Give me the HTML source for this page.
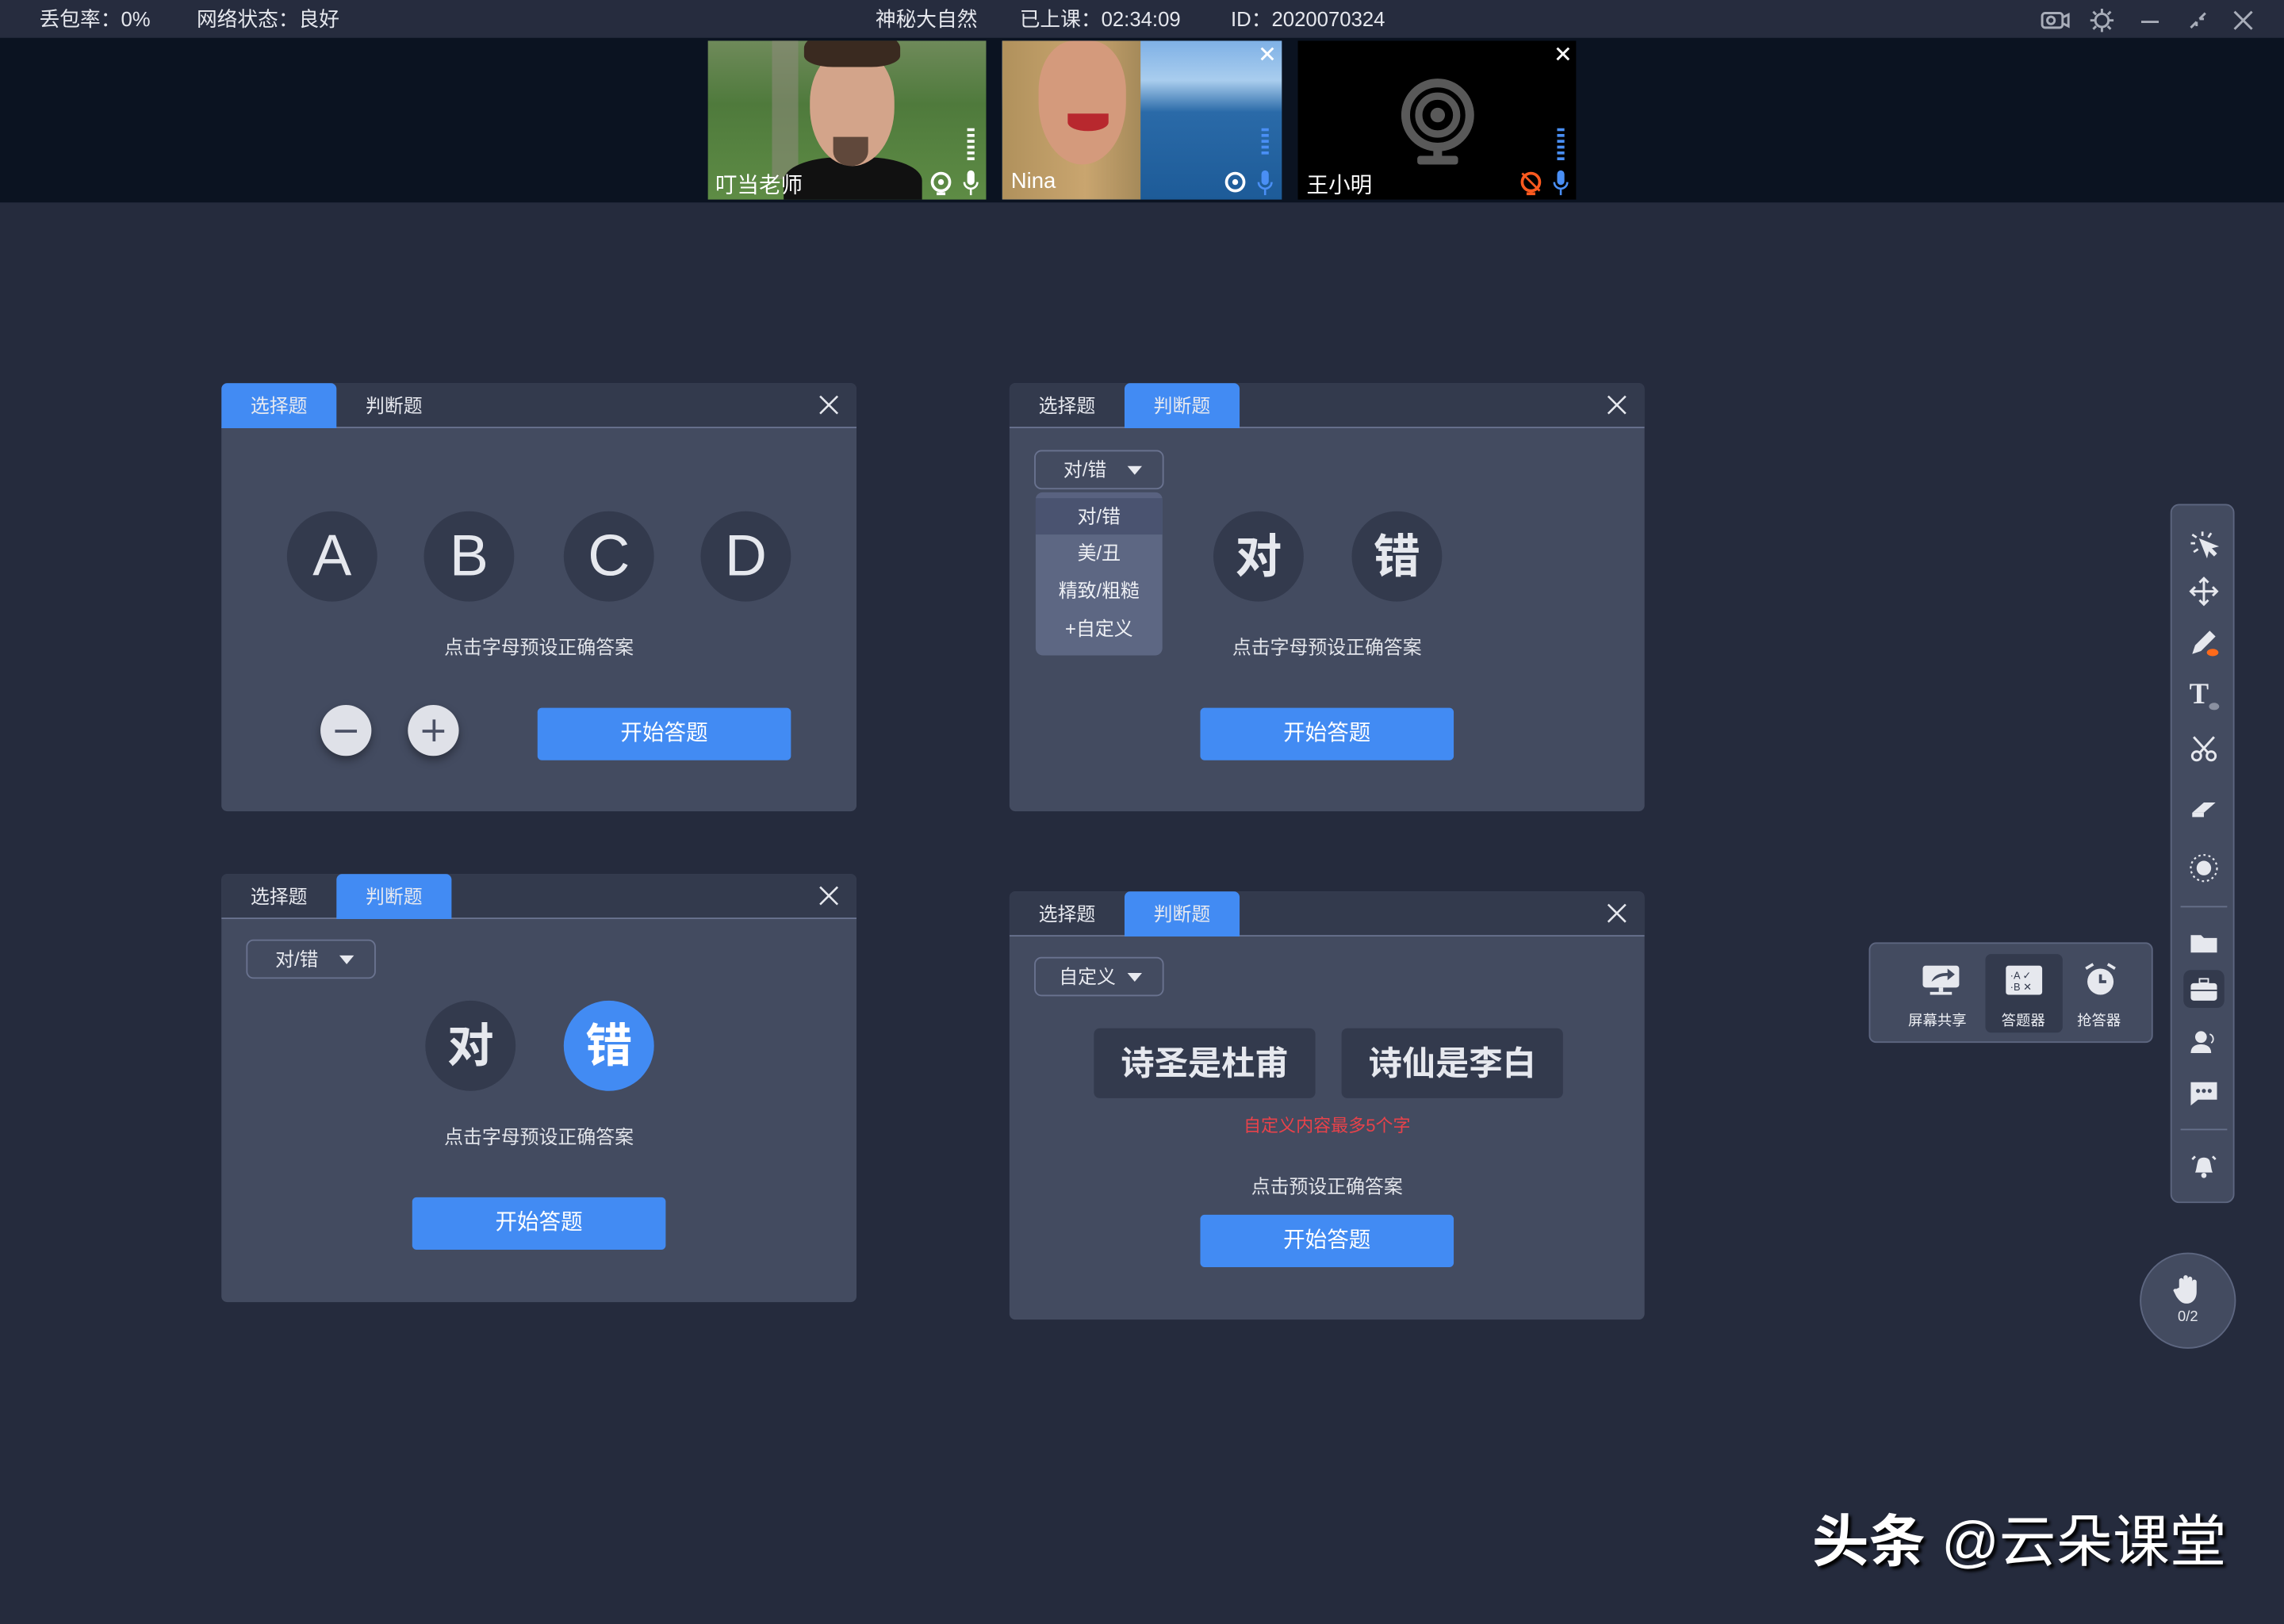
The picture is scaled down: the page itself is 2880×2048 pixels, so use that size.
<!DOCTYPE html>
<html><head><meta charset="utf-8"><style>
*{margin:0;padding:0;box-sizing:border-box}
html,body{width:2880px;height:2048px;overflow:hidden;background:#252b3d}
#s{position:absolute;left:0;top:0;width:1568px;height:1115px;transform:scale(1.836735,1.836771);transform-origin:0 0;font-family:"Liberation Sans","Noto Sans CJK SC",sans-serif;color:#fff;background:#252b3d}
.a{position:absolute}
.top{left:0;top:0;width:1568px;height:26px;background:#262c3e;font-size:14px;line-height:26px;color:#e6e8ee}
.strip{left:0;top:26px;width:1568px;height:113px;background:#0b1321}
.panel{position:absolute;width:436px;height:294px;background:#434b60;border-radius:4px;overflow:hidden}
.hdr{position:absolute;left:0;top:0;width:100%;height:31px;background:#333a4d;border-bottom:1px solid #6a7390}
.tab{position:absolute;top:0;height:31px;width:79px;text-align:center;line-height:31px;font-size:13px;color:#e8eaf0}
.tab.on{background:#428bf3;border-radius:4px 4px 0 0}
.x{position:absolute;right:12px;top:8px;width:14px;height:14px}
.circ{position:absolute;width:62px;height:62px;border-radius:50%;background:#333a4d;color:#e6e8ee;text-align:center;line-height:62px;font-size:40px}
.cn{font-size:32px;font-weight:bold}
.hint{position:absolute;width:100%;text-align:center;font-size:13px;color:#e2e4ea}
.btn{position:absolute;width:174px;height:36px;background:#428bf3;border-radius:3px;text-align:center;line-height:36px;font-size:15px;color:#fff}
.dd{position:absolute;width:89px;height:27px;border:1px solid #6a7390;border-radius:5px;font-size:13px;line-height:25px;padding-left:18px;color:#e8eaf0}
.dd:after{content:"";position:absolute;right:14px;top:10px;border-left:5px solid transparent;border-right:5px solid transparent;border-top:6px solid #e8eaf0}
.pm{position:absolute;width:35px;height:35px;border-radius:50%;background:#dfe1e8;box-shadow:0 3px 6px rgba(0,0,0,.35)}
.tool{position:absolute;left:1490px;top:346px;width:44px;height:480px;background:#434b60;border:1px solid #5d6680;border-radius:6px}
.ic{position:absolute;left:11px;width:22px;height:22px}
</style></head><body><div id="s">
<div class="a top"><span class="a" style="left:27px">丢包率：0%</span><span class="a" style="left:135px">网络状态：良好</span>
<span class="a" style="left:601px">神秘大自然</span><span class="a" style="left:700px">已上课：02:34:09</span><span class="a" style="left:845px">ID：2020070324</span>
<svg class="a" style="left:1400px;top:5px" width="150" height="18" fill="none" stroke="#a8adb9" stroke-width="1.6">
<rect x="2" y="4" width="14" height="10" rx="2"/><path d="M16 7l4-2v8l-4-2"/><circle cx="8" cy="9" r="2.5"/>
<circle cx="43" cy="9" r="4.5"/><path d="M43 1v3M43 14v3M35 9h3M48 9h3M37 3l2 2M47 13l2 2M49 3l-2 2M37 15l2-2"/>
<path d="M70 10h12"/><path d="M104 14l4-4M108 10v3M114 4l-4 4M110 8h3"/><path d="M134 3l12 12M146 3l-12 12"/></svg></div>
<div class="a strip"></div>
<div class="a" style="left:486px;top:28px;width:191px;height:109px;overflow:hidden;background:linear-gradient(180deg,#6f8a5a 0%,#4f7a3c 40%,#5e8c45 100%)">
<div class="a" style="left:44px;top:-5px;width:18px;height:100px;background:#8a8a78;opacity:.6"></div>
<div class="a" style="left:52px;top:80px;width:95px;height:40px;border-radius:40% 40% 0 0;background:#111"></div>
<div class="a" style="left:70px;top:6px;width:58px;height:80px;border-radius:45% 45% 50% 50%;background:#d3a48a"></div>
<div class="a" style="left:66px;top:-8px;width:66px;height:26px;border-radius:50% 50% 30% 30%;background:#3a2a20"></div>
<div class="a" style="left:86px;top:66px;width:24px;height:20px;border-radius:0 0 50% 50%;background:#3a2a20;opacity:.75"></div>
<span class="a" style="left:5px;top:88px;font-size:15px">叮当老师</span>
<svg class="a" style="left:152px;top:60px" width="36" height="48" fill="#fff"><rect x="26" y="0" width="5" height="2"/><rect x="26" y="4" width="5" height="2"/><rect x="26" y="8" width="5" height="2"/><rect x="26" y="12" width="5" height="2"/><rect x="26" y="16" width="5" height="2"/><rect x="26" y="20" width="5" height="2"/><circle cx="8" cy="37" r="6" fill="none" stroke="#fff" stroke-width="2"/><circle cx="8" cy="37" r="2"/><rect x="5" y="44" width="6" height="2"/><rect x="26" y="29" width="5" height="10" rx="2.5"/><path d="M24 37a4.5 4.5 0 0 0 9 0M28.5 42v4" stroke="#fff" fill="none" stroke-width="1.4"/></svg>
</div>
<div class="a" style="left:688px;top:28px;width:192px;height:109px;overflow:hidden;background:linear-gradient(180deg,#7fb1e6 0%,#a9cdee 25%,#2a6aa8 45%,#1d5b98 100%)">
<div class="a" style="left:0;top:0;width:95px;height:109px;background:linear-gradient(90deg,#b0915c,#c9a56f 60%,#a58a5a)"></div>
<div class="a" style="left:25px;top:0;width:60px;height:85px;border-radius:40% 40% 50% 50%;background:#d49a7c"></div>
<div class="a" style="left:45px;top:50px;width:28px;height:12px;border-radius:0 0 50% 50%;background:#b8282e"></div>
<span class="a" style="left:6px;top:88px;font-size:15px">Nina</span>
<svg class="a" style="left:176px;top:3px" width="12" height="12" stroke="#fff" stroke-width="1.6"><path d="M2 2l8 8M10 2l-8 8"/></svg>
<svg class="a" style="left:152px;top:60px" width="36" height="48"><g fill="#4a8ff5"><rect x="26" y="0" width="5" height="2"/><rect x="26" y="4" width="5" height="2"/><rect x="26" y="8" width="5" height="2"/><rect x="26" y="12" width="5" height="2"/><rect x="26" y="16" width="5" height="2"/><rect x="26" y="29" width="5" height="10" rx="2.5"/></g><path d="M24 37a4.5 4.5 0 0 0 9 0M28.5 42v4" stroke="#4a8ff5" fill="none" stroke-width="1.4"/><circle cx="8" cy="37" r="6" fill="none" stroke="#fff" stroke-width="2"/><circle cx="8" cy="37" r="2" fill="#fff"/></svg>
</div>
<div class="a" style="left:891px;top:28px;width:191px;height:109px;background:#000">
<svg class="a" style="left:70px;top:24px" width="52" height="62"><circle cx="26" cy="27" r="22" fill="none" stroke="#595959" stroke-width="6"/><circle cx="26" cy="27" r="13" fill="none" stroke="#595959" stroke-width="5"/><circle cx="26" cy="27" r="5" fill="#595959"/><rect x="23" y="49" width="6" height="6" fill="#595959"/><rect x="12" y="55" width="28" height="6" rx="2" fill="#595959"/></svg>
<span class="a" style="left:6px;top:88px;font-size:15px">王小明</span>
<svg class="a" style="left:176px;top:3px" width="12" height="12" stroke="#fff" stroke-width="1.6"><path d="M2 2l8 8M10 2l-8 8"/></svg>
<svg class="a" style="left:152px;top:60px" width="36" height="48"><g fill="#4a8ff5"><rect x="26" y="0" width="5" height="2"/><rect x="26" y="4" width="5" height="2"/><rect x="26" y="8" width="5" height="2"/><rect x="26" y="12" width="5" height="2"/><rect x="26" y="16" width="5" height="2"/><rect x="26" y="20" width="5" height="2"/><rect x="26" y="29" width="5" height="10" rx="2.5"/></g><path d="M24 37a4.5 4.5 0 0 0 9 0M28.5 42v4" stroke="#4a8ff5" fill="none" stroke-width="1.4"/><circle cx="8" cy="37" r="6" fill="none" stroke="#ff5a1f" stroke-width="2"/><path d="M2 31l12 12" stroke="#ff5a1f" stroke-width="1.5"/><rect x="5" y="44" width="6" height="2" fill="#ff5a1f"/></svg>
</div>

<div class="panel" style="left:152px;top:263px">
<div class="hdr"><div class="tab on" style="left:0">选择题</div><div class="tab" style="left:79px">判断题</div>
<svg class="x" stroke="#e6e8ee" stroke-width="1.4"><path d="M1 1l12 12M13 1L1 13"/></svg></div>
<div class="circ" style="left:45px;top:88px">A</div><div class="circ" style="left:139px;top:88px">B</div><div class="circ" style="left:235px;top:88px">C</div><div class="circ" style="left:329px;top:88px">D</div>
<div class="hint" style="top:171px">点击字母预设正确答案</div>
<div class="pm" style="left:68px;top:221px"><div class="a" style="left:10px;top:17px;width:15px;height:2px;background:#4a5064"></div></div>
<div class="pm" style="left:128px;top:221px"><div class="a" style="left:10px;top:17px;width:15px;height:2px;background:#4a5064"></div><div class="a" style="left:16.5px;top:10px;width:2px;height:15px;background:#4a5064"></div></div>
<div class="btn" style="left:217px;top:223px">开始答题</div>
</div>

<div class="panel" style="left:693px;top:263px">
<div class="hdr"><div class="tab" style="left:0">选择题</div><div class="tab on" style="left:79px">判断题</div>
<svg class="x" stroke="#e6e8ee" stroke-width="1.4"><path d="M1 1l12 12M13 1L1 13"/></svg></div>
<div class="dd" style="left:17px;top:46px;padding-left:19px">对/错</div>
<div class="a" style="left:18px;top:75px;width:87px;height:112px;background:#5d6783;border-radius:5px;overflow:hidden;font-size:13px;text-align:center;color:#eef0f5">
<div style="height:4px;background:#596280"></div>
<div style="height:25px;line-height:25px;background:#4a5370">对/错</div>
<div style="height:26px;line-height:26px">美/丑</div>
<div style="height:26px;line-height:26px">精致/粗糙</div>
<div style="height:26px;line-height:26px">+自定义</div></div>
<div class="circ cn" style="left:140px;top:88px">对</div><div class="circ cn" style="left:235px;top:88px">错</div>
<div class="hint" style="top:171px">点击字母预设正确答案</div>
<div class="btn" style="left:131px;top:223px">开始答题</div>
</div>

<div class="panel" style="left:152px;top:600px">
<div class="hdr"><div class="tab" style="left:0">选择题</div><div class="tab on" style="left:79px">判断题</div>
<svg class="x" stroke="#e6e8ee" stroke-width="1.4"><path d="M1 1l12 12M13 1L1 13"/></svg></div>
<div class="dd" style="left:17px;top:45px;padding-left:19px">对/错</div>
<div class="circ cn" style="left:140px;top:87px">对</div><div class="circ cn" style="left:235px;top:87px;background:#428bf3;color:#fff">错</div>
<div class="hint" style="top:170px">点击字母预设正确答案</div>
<div class="btn" style="left:131px;top:222px">开始答题</div>
</div>

<div class="panel" style="left:693px;top:612px">
<div class="hdr"><div class="tab" style="left:0">选择题</div><div class="tab on" style="left:79px">判断题</div>
<svg class="x" stroke="#e6e8ee" stroke-width="1.4"><path d="M1 1l12 12M13 1L1 13"/></svg></div>
<div class="dd" style="left:17px;top:45px;padding-left:16px">自定义</div>
<div class="a" style="left:58px;top:94px;width:152px;height:48px;background:#333a4d;border-radius:4px;text-align:center;line-height:48px;font-size:23px;font-weight:bold;color:#e6e8ee">诗圣是杜甫</div>
<div class="a" style="left:228px;top:94px;width:152px;height:48px;background:#333a4d;border-radius:4px;text-align:center;line-height:48px;font-size:23px;font-weight:bold;color:#e6e8ee">诗仙是李白</div>
<div class="hint" style="top:152px;font-size:12px;color:#e8424a">自定义内容最多5个字</div>
<div class="hint" style="top:192px">点击预设正确答案</div>
<div class="btn" style="left:131px;top:222px">开始答题</div>
</div>

<div class="a" style="left:1283px;top:647px;width:195px;height:69px;background:#434b60;border:1px solid #5d6680;border-radius:5px;font-size:10px;color:#eef0f5">
<div class="a" style="left:79px;top:7px;width:53px;height:54px;background:#333a4d;border-radius:4px"></div>
<svg class="a" style="left:36px;top:14px" width="26" height="22"><rect x="0" y="1" width="25" height="15" rx="2" fill="#e6e8ee"/><path d="M6 12c2-5 6-6 11-6V3l5 4-5 4V8c-4 0-7 1-11 4z" fill="#434b60"/><rect x="11" y="16" width="3" height="3" fill="#e6e8ee"/><rect x="5" y="19" width="15" height="2" fill="#e6e8ee"/></svg>
<div class="a" style="left:26px;top:44px">屏幕共享</div>
<svg class="a" style="left:93px;top:14px" width="26" height="22"><rect x="0" y="1" width="25" height="20" rx="2" fill="#e6e8ee"/><text x="3" y="10" font-size="7" fill="#333a4d" font-family="Liberation Sans">·A ✓</text><text x="3" y="18" font-size="7" fill="#333a4d" font-family="Liberation Sans">·B ✕</text></svg>
<div class="a" style="left:90px;top:44px">答题器</div>
<svg class="a" style="left:145px;top:12px" width="26" height="26"><circle cx="13" cy="14" r="9" fill="#e6e8ee"/><path d="M13 9v5h4" stroke="#434b60" stroke-width="2" fill="none"/><path d="M3 5l5-3M23 5l-5-3" stroke="#e6e8ee" stroke-width="2"/></svg>
<div class="a" style="left:142px;top:44px">抢答器</div>
</div>

<div class="tool">
<svg class="ic" style="top:15px" fill="none" stroke="#e6e8ee" stroke-width="1.5"><path d="M3 5l3 2M2 11h3M4 17l3-2M10 3v3M16 4l-2 3"/><path d="M9 9l10 4-4 1 4 4-1 1-4-4-1 4z" fill="#e6e8ee"/></svg>
<svg class="ic" style="top:48px" fill="none" stroke="#e6e8ee" stroke-width="1.6"><path d="M11 2v18M2 11h18M8 5l3-3 3 3M8 17l3 3 3-3M5 8l-3 3 3 3M17 8l3 3-3 3"/></svg>
<svg class="ic" style="top:83px"><path d="M3 19l2-6 10-10 4 4-10 10z" fill="#e6e8ee"/><ellipse cx="17" cy="18" rx="4" ry="2.5" fill="#ff6a1a"/></svg>
<svg class="ic" style="top:119px"><text x="1" y="17" font-size="20" font-weight="bold" font-family="Liberation Serif" fill="#e6e8ee">T</text><ellipse cx="18" cy="19" rx="3.5" ry="2.5" fill="#8a90a0"/></svg>
<svg class="ic" style="top:156px" fill="none" stroke="#e6e8ee" stroke-width="1.6"><circle cx="6" cy="16" r="3"/><circle cx="16" cy="16" r="3"/><path d="M8 14l10-11M14 14L4 3"/></svg>
<svg class="ic" style="top:197px"><path d="M3 14l8-7h8l-8 7z" fill="#e6e8ee"/><path d="M3 14h8v3H3z" fill="#e6e8ee"/></svg>
<svg class="ic" style="top:238px"><circle cx="11" cy="11" r="5" fill="#e6e8ee"/><g stroke="#e6e8ee" stroke-width="1.2" stroke-dasharray="1.5 2"><circle cx="11" cy="11" r="9" fill="none"/></g></svg>
<div class="a" style="left:6px;top:275px;width:32px;height:1px;background:#66708a"></div>
<svg class="ic" style="top:289px"><path d="M2 6h7l2 2h9v10H2z" fill="#e6e8ee"/></svg>
<div class="a" style="left:8px;top:319px;width:28px;height:26px;background:#333a4d;border-radius:5px"></div>
<svg class="ic" style="top:322px"><rect x="2" y="6" width="18" height="12" rx="2" fill="#e6e8ee"/><rect x="8" y="3" width="6" height="3" fill="none" stroke="#e6e8ee"/><path d="M2 11h18" stroke="#333a4d"/></svg>
<svg class="ic" style="top:357px"><circle cx="9" cy="8" r="4" fill="#e6e8ee"/><path d="M2 19c0-5 4-6 7-6s7 1 7 6z" fill="#e6e8ee"/><path d="M15 6c3 1 3 5 1 6" stroke="#e6e8ee" fill="none"/></svg>
<svg class="ic" style="top:392px"><path d="M2 4h18v12H7l-5 4z" fill="#e6e8ee"/><circle cx="7" cy="10" r="1.4" fill="#434b60"/><circle cx="11" cy="10" r="1.4" fill="#434b60"/><circle cx="15" cy="10" r="1.4" fill="#434b60"/></svg>
<div class="a" style="left:6px;top:428px;width:32px;height:1px;background:#66708a"></div>
<svg class="ic" style="top:442px"><path d="M5 16c1-2 1-5 2-8 1-3 7-3 8 0 1 3 1 6 2 8z" fill="#e6e8ee"/><circle cx="11" cy="18" r="1.8" fill="#e6e8ee"/><path d="M3 7l2-2M19 7l-2-2" stroke="#e6e8ee" stroke-width="1.5"/></svg>
</div>

<div class="a" style="left:1469px;top:860px;width:66px;height:66px;border-radius:50%;background:#434b60;border:1px solid #5d6680;text-align:center;font-size:10px;color:#e6e8ee">
<svg style="margin-top:13px" width="22" height="22"><path d="M5 10V5a1.5 1.5 0 0 1 3 0v4V3a1.5 1.5 0 0 1 3 0v6V4a1.5 1.5 0 0 1 3 0v6V6a1.5 1.5 0 0 1 3 0v7c0 5-3 8-7 8-3 0-5-2-7-5l-2-4a1.4 1.4 0 0 1 2-1z" fill="#e6e8ee"/></svg>
<div>0/2</div></div>

<div class="a" style="left:1244px;top:1034px;font-size:39px;line-height:52px;color:#fff;text-shadow:2px 2px 2px #000;white-space:nowrap"><b>头条</b> @云朵课堂</div>
</div></body></html>
